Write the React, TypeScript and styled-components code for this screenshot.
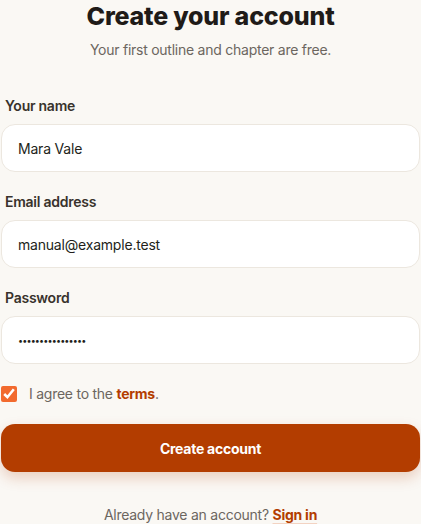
import React, { useState } from 'react';
import styled, { createGlobalStyle } from 'styled-components';

const GlobalStyle = createGlobalStyle`
  html, body {
    margin: 0;
    padding: 0;
    background: #faf8f4;
  }
  body {
    font-family: Inter, "Noto Sans", sans-serif;
    color: #2b2622;
    letter-spacing: -0.25px;
    -webkit-font-smoothing: antialiased;
  }
`;

const Page = styled.main`
  padding: 1px 1px 0;
  display: flex;
  flex-direction: column;
`;

const Header = styled.header`
  display: flex;
  flex-direction: column;
  align-items: center;
  gap: 9px;
  margin-bottom: 36px;
`;

const Title = styled.h1`
  margin: 0;
  font-size: 25px;
  line-height: 30px;
  font-weight: 800;
  letter-spacing: -0.2px;
  color: #1f1b18;
`;

const Subtitle = styled.p`
  margin: 0;
  font-size: 14px;
  line-height: 20px;
  color: #6c665f;
`;

const Form = styled.form`
  display: flex;
  flex-direction: column;
`;

const Field = styled.label`
  display: flex;
  flex-direction: column;
  gap: 8px;
  margin-bottom: 20px;
`;

const LabelText = styled.span`
  padding-left: 4px;
  font-size: 14px;
  line-height: 20px;
  font-weight: 600;
  color: #38322c;
`;

const Input = styled.input<{ $secret?: boolean }>`
  box-sizing: border-box;
  width: 100%;
  height: 48px;
  padding: 0 16px;
  border: 1px solid #ece7df;
  border-radius: 14px;
  background: #ffffff;
  font-family: inherit;
  font-size: ${(p) => (p.$secret ? '9px' : '14px')};
  letter-spacing: ${(p) => (p.$secret ? '-0.85px' : '-0.2px')};
  color: #231f1b;
  outline: none;
`;

const AgreeRow = styled.label`
  display: flex;
  align-items: center;
  gap: 12px;
  margin: 0 0 20px;
  font-size: 14px;
  line-height: 20px;
  color: #6c665f;
`;

const Checkbox = styled.input`
  width: 16px;
  height: 16px;
  margin: 0;
  accent-color: #f26a2e;
`;

const Link = styled.a<{ $underline?: boolean }>`
  font-weight: 700;
  color: #b33d00;
  text-decoration: ${(p) => (p.$underline ? 'underline' : 'none')};
  text-decoration-color: #f3d3c2;
  text-decoration-thickness: 2px;
  text-underline-offset: 3px;
`;

const SubmitButton = styled.button`
  height: 48px;
  border: none;
  border-radius: 14px;
  background: #b33d00;
  color: #ffffff;
  font-family: inherit;
  font-size: 14px;
  font-weight: 700;
  letter-spacing: -0.25px;
  box-shadow: 0 6px 14px rgba(179, 61, 0, 0.22);
  cursor: pointer;
`;

const Footer = styled.p`
  margin: 33px 0 0;
  text-align: center;
  font-size: 14px;
  line-height: 20px;
  color: #6c665f;
`;

export default function App() {
  const [name, setName] = useState('Mara Vale');
  const [email, setEmail] = useState('manual@example.test');
  const [password, setPassword] = useState('correcthorse1234');
  const [agreed, setAgreed] = useState(true);

  return (
    <>
      <GlobalStyle />
      <Page>
        <Header>
          <Title>Create your account</Title>
          <Subtitle>Your first outline and chapter are free.</Subtitle>
        </Header>
        <Form onSubmit={(e) => e.preventDefault()}>
          <Field>
            <LabelText>Your name</LabelText>
            <Input value={name} onChange={(e) => setName(e.target.value)} />
          </Field>
          <Field>
            <LabelText>Email address</LabelText>
            <Input type="email" value={email} onChange={(e) => setEmail(e.target.value)} />
          </Field>
          <Field>
            <LabelText>Password</LabelText>
            <Input
              type="password"
              $secret
              value={password}
              onChange={(e) => setPassword(e.target.value)}
            />
          </Field>
          <AgreeRow>
            <Checkbox type="checkbox" checked={agreed} onChange={(e) => setAgreed(e.target.checked)} />
            <span>
              I agree to the <Link href="#">terms</Link>.
            </span>
          </AgreeRow>
          <SubmitButton type="submit">Create account</SubmitButton>
        </Form>
        <Footer>
          Already have an account? <Link href="#" $underline>Sign in</Link>
        </Footer>
      </Page>
    </>
  );
}
